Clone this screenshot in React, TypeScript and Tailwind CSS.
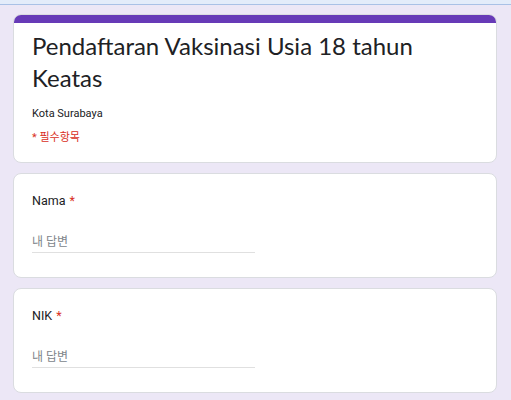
function Question({ label }: { label: string }) {
  return (
    <div className="rounded-[8px] border border-[#dadce0] bg-white px-[18px] pb-[24px] pt-[17px]">
      <div className="text-[12.5px] leading-[20px] text-[#202124]">
        {label}
        <span className="ml-[4px] text-[#d93025]">*</span>
      </div>
      <div className="mt-[21px] w-[223px] border-b border-[#e0e0e0]">
        <input
          type="text"
          placeholder="내 답변"
          className="block h-[20px] w-full bg-transparent text-[12px] leading-[20px] text-[#202124] outline-none placeholder:text-[#80868b]"
          style={{ fontFamily: "Roboto, 'Noto Sans CJK KR', sans-serif" }}
        />
      </div>
    </div>
  );
}

export default function App() {
  return (
    <div
      className="min-h-[400px] bg-[#ece7f6]"
      style={{ fontFamily: "Roboto, 'Noto Sans CJK KR', sans-serif" }}
    >
      <div className="h-[5px] border-b border-[#a9c1e6] bg-[#e3ecfa]" />
      <div className="ml-[13px] mr-[14px] flex flex-col gap-[10px] pt-[9px]">
        <div className="overflow-hidden rounded-[8px] border border-[#dadce0] bg-white">
          <div className="-mx-px -mt-px h-[9px] bg-[#673ab7]" />
          <div className="px-[18px] pb-[16px] pt-[7px]">
            <h1
              className="text-[24px] font-normal leading-[32px] text-[#202124]"
              style={{ fontFamily: "Lato, sans-serif" }}
            >
              Pendaftaran Vaksinasi Usia 18 tahun Keatas
            </h1>
            <p className="mt-[12px] text-[11px] leading-[16px] text-[#202124]">
              Kota Surabaya
            </p>
            <p className="mt-[8px] text-[11px] leading-[16px] text-[#d93025]">
              * 필수항목
            </p>
          </div>
        </div>
        <Question label="Nama" />
        <Question label="NIK" />
      </div>
    </div>
  );
}
